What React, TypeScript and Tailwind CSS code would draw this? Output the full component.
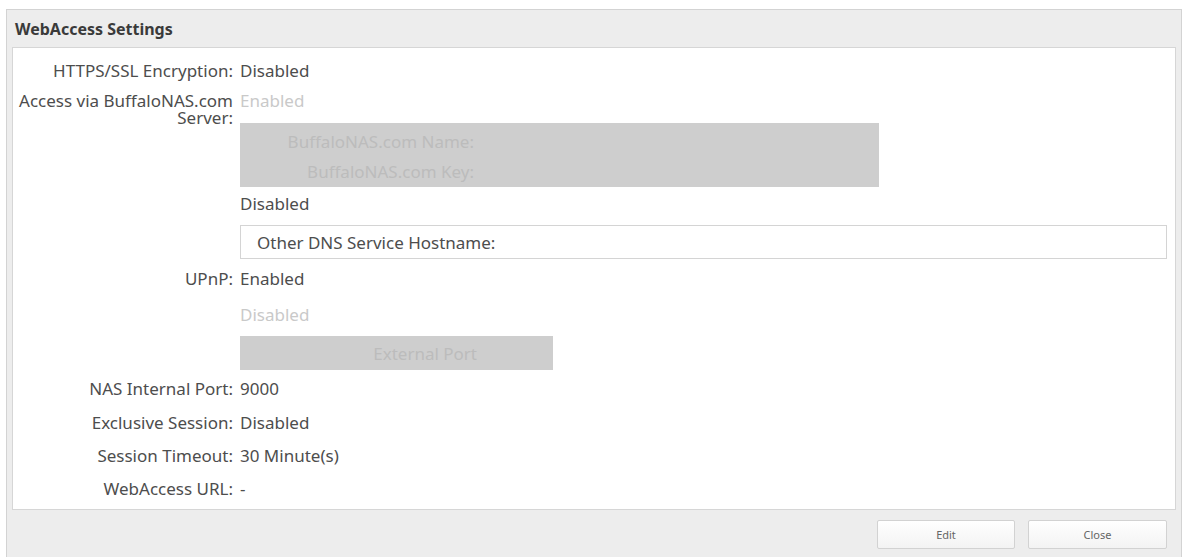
import React from "react";

const font = { fontFamily: '"Noto Sans", "Open Sans", sans-serif' };

function Row({ label, children, className = "" }: { label: React.ReactNode; children: React.ReactNode; className?: string }) {
  return (
    <div className={`flex ${className}`}>
      <div className="w-[227px] shrink-0 pr-[7px] text-right text-[#4d4d4d]">{label}</div>
      <div className="flex-1 text-[#4d4d4d]">{children}</div>
    </div>
  );
}

export default function App() {
  return (
    <div className="w-[1185px] h-[557px] overflow-hidden bg-white pl-[6px] pt-[9px] pr-[3px] text-[17px] leading-[17px]" style={font}>
      <div className="flex h-[560px] flex-col border border-[#d3d3d3] bg-[#ededed]">
        <div className="flex h-[37px] items-center pl-[8px] pt-[2px] text-[16px] font-bold text-[#3a3a3a]">WebAccess Settings</div>
        <div className="mx-[5px] h-[463px] border border-[#d6d6d6] bg-white pt-[14px]">
          <Row label="HTTPS/SSL Encryption:">Disabled</Row>
          <Row className="mt-[13px]" label={<>Access via BuffaloNAS.com<br />Server:</>}>
            <div className="text-[#c9c9c9]">Enabled</div>
            <div className="mt-[14px] flex h-[64px] w-[639px] bg-[#cecece]">
              <div className="flex w-[234px] flex-col items-end pt-[10px] gap-[13px] text-[#bcbcbc]">
                <div>BuffaloNAS.com Name:</div>
                <div>BuffaloNAS.com Key:</div>
              </div>
            </div>
            <div className="mt-[8px]">Disabled</div>
            <div className="mt-[13px] flex h-[34px] w-[927px] items-center border border-[#d4d4d4] pl-[16px]">Other DNS Service Hostname:</div>
          </Row>
          <Row className="mt-[11px]" label="UPnP:">
            <div>Enabled</div>
            <div className="mt-[19px] text-[#c9c9c9]">Disabled</div>
            <div className="mt-[13px] flex h-[34px] w-[313px] items-center justify-end bg-[#cecece] pr-[76px] text-[#bcbcbc]">External Port</div>
          </Row>
          <Row className="mt-[10px]" label="NAS Internal Port:">9000</Row>
          <Row className="mt-[17px]" label="Exclusive Session:">Disabled</Row>
          <Row className="mt-[16px]" label="Session Timeout:">30 Minute(s)</Row>
          <Row className="mt-[16px]" label="WebAccess URL:">-</Row>
        </div>
        <div className="flex justify-end gap-[13px] pr-[14px] pt-[10px]">
          <button className="flex h-[29px] w-[138px] items-center justify-center rounded-[2px] border border-[#d2d2d2] bg-gradient-to-b from-white to-[#f3f3f3] text-[11px] text-[#666]">Edit</button>
          <button className="flex h-[29px] w-[139px] items-center justify-center rounded-[2px] border border-[#d2d2d2] bg-gradient-to-b from-white to-[#f3f3f3] text-[11px] text-[#666]">Close</button>
        </div>
      </div>
    </div>
  );
}
